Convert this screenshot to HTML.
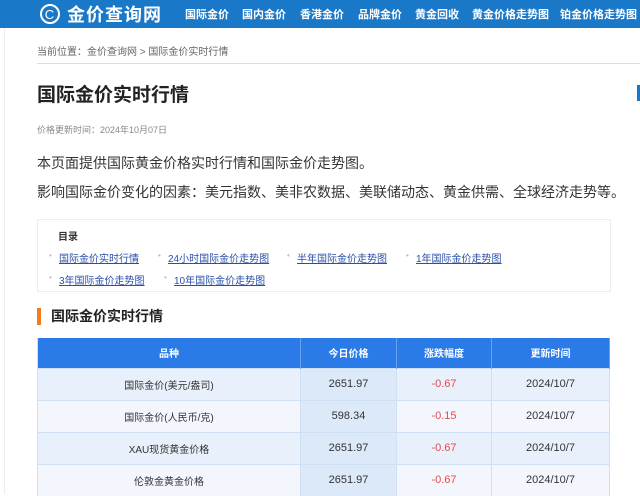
<!DOCTYPE html>
<html><head><meta charset="utf-8"><style>
*{margin:0;padding:0;box-sizing:border-box}
body{width:640px;height:494px;overflow:hidden;background:#fff;font-family:"Liberation Sans","Noto Sans CJK SC",sans-serif;color:#333;position:relative}
.nav{height:28px;background:#1a78c8;position:relative;color:#fff}
.logo{position:absolute;left:40px;top:0;height:28px;display:flex;align-items:center;font-size:18px;font-weight:bold;letter-spacing:1px}
.logo .c{width:20px;height:20px;border:2px solid #fff;border-radius:50%;font-size:13px;display:flex;align-items:center;justify-content:center;margin-right:7px;font-weight:normal}
.nav a{position:absolute;top:6px;font-size:11px;font-weight:bold;color:#fff;text-decoration:none}
.crumb{position:absolute;left:37px;top:43px;font-size:10px;color:#666}
.hr{position:absolute;left:37px;right:0;top:63px;border-top:1px solid #ddd}
h1{position:absolute;left:37px;top:80px;font-size:19px;font-weight:bold;color:#222}
.upd{position:absolute;left:37px;top:123px;font-size:9px;color:#888}
.p{position:absolute;left:37px;font-size:14px;color:#333}
.toc{position:absolute;left:37px;top:219px;width:574px;height:73px;border:1px solid #eee}
.toc .t{position:absolute;left:20px;top:8px;font-size:10px;color:#333;font-weight:bold}
.toc .l{position:absolute;font-size:10px;color:#2a4fa8;text-decoration:underline}
.toc .l:before{content:"•";color:#bbb;position:absolute;left:-10px;text-decoration:none;font-size:8px;top:1px}
.sec{position:absolute;left:37px;top:308px;border-left:4px solid #f37b1d;padding-left:10px;font-size:14px;font-weight:bold;color:#222;height:17px;line-height:17px}
table{position:absolute;left:37px;top:338px;width:573px;border-collapse:collapse;font-size:10px;text-align:center;border-left:1px solid #cfe0f4}
th{background:#2a7ae8;color:#fff;height:30px;border-right:1px solid #6aa2f0}
td{height:32px;border-right:1px solid #cfe0f4;border-top:1px solid #cfe0f4;color:#333}
td.n{font-size:11px}
tr.a td{background:#e7f0fb}
tr.b td{background:#f3f7fd}
td.pr{background:#dce9f8!important}
td.r{color:#e04b4b}
</style></head><body>
<div style="position:absolute;left:4px;top:28px;bottom:0;border-left:1px solid #eee"></div>
<div class="nav">
<div class="logo"><span class="c">C</span>金价查询网</div>
<a style="left:185px">国际金价</a><a style="left:242px">国内金价</a><a style="left:300px">香港金价</a><a style="left:358px">品牌金价</a><a style="left:415px">黄金回收</a><a style="left:472px">黄金价格走势图</a><a style="left:560px">铂金价格走势图</a>
</div>
<div style="position:absolute;left:637px;top:85px;width:3px;height:16px;background:#1a78c8"></div>
<div class="crumb">当前位置：金价查询网 &gt; 国际金价实时行情</div>
<div class="hr"></div>
<h1>国际金价实时行情</h1>
<div class="upd">价格更新时间：2024年10月07日</div>
<div class="p" style="top:153px">本页面提供国际黄金价格实时行情和国际金价走势图。</div>
<div class="p" style="top:182px">影响国际金价变化的因素：美元指数、美非农数据、美联储动态、黄金供需、全球经济走势等。</div>
<div class="toc"><div class="t">目录</div>
<span class="l" style="left:21px;top:30px">国际金价实时行情</span>
<span class="l" style="left:130px;top:30px">24小时国际金价走势图</span>
<span class="l" style="left:259px;top:30px">半年国际金价走势图</span>
<span class="l" style="left:378px;top:30px">1年国际金价走势图</span>
<span class="l" style="left:21px;top:52px">3年国际金价走势图</span>
<span class="l" style="left:136px;top:52px">10年国际金价走势图</span>
</div>
<div class="sec">国际金价实时行情</div>
<table>
<tr><th style="width:263px">品种</th><th style="width:96px">今日价格</th><th style="width:95px">涨跌幅度</th><th>更新时间</th></tr>
<tr class="a"><td>国际金价(美元/盎司)</td><td class="pr n">2651.97</td><td class="r n">-0.67</td><td class="n">2024/10/7</td></tr>
<tr class="b"><td>国际金价(人民币/克)</td><td class="pr n">598.34</td><td class="r n">-0.15</td><td class="n">2024/10/7</td></tr>
<tr class="a"><td>XAU现货黄金价格</td><td class="pr n">2651.97</td><td class="r n">-0.67</td><td class="n">2024/10/7</td></tr>
<tr class="b"><td>伦敦金黄金价格</td><td class="pr n">2651.97</td><td class="r n">-0.67</td><td class="n">2024/10/7</td></tr>
</table>
</body></html>
